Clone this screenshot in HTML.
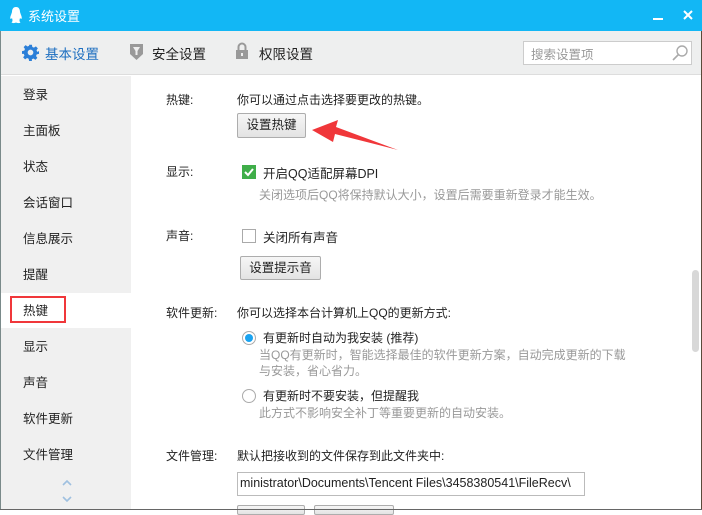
<!DOCTYPE html>
<html><head><meta charset="utf-8"><style>
*{margin:0;padding:0;box-sizing:border-box}
body{width:702px;height:510px;overflow:hidden;font-family:"Liberation Sans","Noto Sans CJK SC",sans-serif;font-size:12px;color:#222;background:#fff;position:relative}
.a{position:absolute;white-space:nowrap}
.title{left:0;top:0;width:702px;height:31px;background:#12b7f5}
.tb{left:0;top:31px;width:702px;height:44px;background:#eeefef;border-bottom:1px solid #ddd}
.side{left:0;top:76px;width:131px;height:434px;background:#f0f0f0}
.si{left:23px;font-size:12.5px}
.btn{border:1px solid #adadad;border-radius:2px;background:linear-gradient(#f6f6f6,#e3e3e3);text-align:center;font-size:12.5px}
.g{color:#999}
.lb{left:166px}
</style></head><body>
<div class="a title"></div>
<svg class="a" style="left:9px;top:6px" width="14" height="18" viewBox="0 0 14 18"><path d="M7 1C4 1 3 3.5 3 6L2 9C1 11 1 13 2 13L3 12C3.5 14 4 15 2.5 16.5C4 17.5 6 17 7 16.5C8 17 10 17.5 11.5 16.5C10 15 10.5 14 11 12L12 13C13 13 13 11 12 9L11 6C11 3.5 10 1 7 1Z" fill="#fff"/></svg>
<div class="a" style="left:28px;top:6px;color:#fff;font-size:13px">系统设置</div>
<div class="a" style="left:653px;top:18px;width:10px;height:2px;background:#fff"></div>
<svg class="a" style="left:683px;top:10px" width="10" height="10"><path d="M1 1L9 9M9 1L1 9" stroke="#fff" stroke-width="2"/></svg>
<div class="a tb"></div>
<svg class="a" style="left:22px;top:44px" width="17" height="17" viewBox="0 0 24 24"><path fill="#2b7fd8" d="M10 1h4l.6 3.2 2.3 1 2.7-1.9 2.8 2.8-1.9 2.7 1 2.3L24 10v4l-3.2.6-1 2.3 1.9 2.7-2.8 2.8-2.7-1.9-2.3 1L14 24h-4l-.6-3.2-2.3-1-2.7 1.9-2.8-2.8 1.9-2.7-1-2.3L0 14v-4l3.2-.6 1-2.3-1.9-2.7 2.8-2.8 2.7 1.9 2.3-1z"/><circle cx="12" cy="12" r="4" fill="#eeefef"/></svg>
<div class="a" style="left:45px;top:43px;font-size:13.5px;color:#1e6fc0">基本设置</div>
<svg class="a" style="left:129px;top:43px" width="15" height="18" viewBox="0 0 15 18"><path d="M1 1h13v10l-6.5 6L1 11z" fill="#999"/><path d="M4 4h7l-2.5 4v4h-2V8z" fill="#eee"/></svg>
<div class="a" style="left:152px;top:43px;font-size:13.5px">安全设置</div>
<svg class="a" style="left:235px;top:42px" width="14" height="18" viewBox="0 0 14 18"><path d="M3.5 8V5a3.5 3.5 0 017 0v3" stroke="#999" stroke-width="2" fill="none"/><rect x="1" y="8" width="12" height="9" fill="#999"/><rect x="6" y="11" width="2" height="3" fill="#eee"/></svg>
<div class="a" style="left:259px;top:43px;font-size:13.5px">权限设置</div>
<div class="a" style="left:523px;top:41px;width:169px;height:24px;border:1px solid #ccc;background:#fff"></div>
<div class="a g" style="left:531px;top:44px;font-size:12.5px">搜索设置项</div>
<svg class="a" style="left:671px;top:44px" width="18" height="18"><circle cx="11" cy="7" r="5" stroke="#aaa" stroke-width="1.4" fill="none"/><path d="M7.5 10.5L2 16" stroke="#aaa" stroke-width="1.6"/></svg>
<div class="a side"></div>
<div class="a" style="left:0;top:293px;width:131px;height:35px;background:#fff"></div>
<div class="a" style="left:10px;top:296px;width:56px;height:27px;border:2px solid #f0373a"></div>
<div class="a si" style="top:84px">登录</div>
<div class="a si" style="top:120px">主面板</div>
<div class="a si" style="top:156px">状态</div>
<div class="a si" style="top:192px">会话窗口</div>
<div class="a si" style="top:228px">信息展示</div>
<div class="a si" style="top:264px">提醒</div>
<div class="a si" style="top:300px">热键</div>
<div class="a si" style="top:336px">显示</div>
<div class="a si" style="top:372px">声音</div>
<div class="a si" style="top:408px">软件更新</div>
<div class="a si" style="top:444px">文件管理</div>
<svg class="a" style="left:61px;top:476px" width="12" height="30"><path d="M2 9l4-4 4 4M2 21l4 4 4-4" stroke="#9fc0e0" stroke-width="1.6" fill="none"/></svg>
<div class="a lb" style="top:91px">热键:</div>
<div class="a" style="left:237px;top:91px">你可以通过点击选择要更改的热键。</div>
<div class="a btn" style="left:237px;top:113px;width:69px;height:25px;line-height:23px">设置热键</div>
<svg class="a" style="left:308px;top:118px" width="92" height="36"><path d="M4 12L30 2 28 9 90 32 27 16 25 24z" fill="#f0373a"/></svg>
<div class="a lb" style="top:163px">显示:</div>
<div class="a" style="left:242px;top:165px;width:14px;height:14px;background:#3fae49"></div>
<svg class="a" style="left:242px;top:165px" width="14" height="14"><path d="M3 7l3 3 5-6" stroke="#fff" stroke-width="2" fill="none"/></svg>
<div class="a" style="left:263px;top:163px;font-size:12.5px">开启QQ适配屏幕DPI</div>
<div class="a g" style="left:259px;top:186px">关闭选项后QQ将保持默认大小，设置后需要重新登录才能生效。</div>
<div class="a lb" style="top:227px">声音:</div>
<div class="a" style="left:242px;top:229px;width:14px;height:14px;border:1px solid #aaa;background:#fff"></div>
<div class="a" style="left:263px;top:227px;font-size:12.5px">关闭所有声音</div>
<div class="a btn" style="left:240px;top:256px;width:81px;height:24px;line-height:22px">设置提示音</div>
<div class="a lb" style="top:304px">软件更新:</div>
<div class="a" style="left:237px;top:304px">你可以选择本台计算机上QQ的更新方式:</div>
<div class="a" style="left:242px;top:331px;width:14px;height:14px;border-radius:50%;border:1px solid #aaa;background:#fff"></div>
<div class="a" style="left:245px;top:334px;width:8px;height:8px;border-radius:50%;background:#1aa3f0"></div>
<div class="a" style="left:263px;top:329px">有更新时自动为我安装 (推荐)</div>
<div class="a g" style="left:259px;top:346px">当QQ有更新时，智能选择最佳的软件更新方案，自动完成更新的下载</div>
<div class="a g" style="left:259px;top:362px">与安装，省心省力。</div>
<div class="a" style="left:242px;top:389px;width:14px;height:14px;border-radius:50%;border:1px solid #aaa;background:#fff"></div>
<div class="a" style="left:263px;top:387px">有更新时不要安装，但提醒我</div>
<div class="a g" style="left:259px;top:404px">此方式不影响安全补丁等重要更新的自动安装。</div>
<div class="a lb" style="top:447px">文件管理:</div>
<div class="a" style="left:237px;top:447px">默认把接收到的文件保存到此文件夹中:</div>
<div class="a" style="left:237px;top:472px;width:348px;height:24px;border:1px solid #bbb;overflow:hidden"><span style="position:absolute;left:2px;top:3px;font-size:12.5px">ministrator\Documents\Tencent Files\3458380541\FileRecv\</span></div>
<div class="a btn" style="left:237px;top:505px;width:68px;height:10px"></div>
<div class="a btn" style="left:314px;top:505px;width:80px;height:10px"></div>
<div class="a" style="left:692px;top:270px;width:7px;height:82px;border-radius:4px;background:#d8d8d8"></div>
<div class="a" style="left:0;top:31px;width:1px;height:479px;background:#7a8a8a"></div>
<div class="a" style="left:701px;top:31px;width:1px;height:479px;background:#5a4a3a"></div>
<div class="a" style="left:0;top:509px;width:702px;height:1px;background:#666"></div>
</body></html>
